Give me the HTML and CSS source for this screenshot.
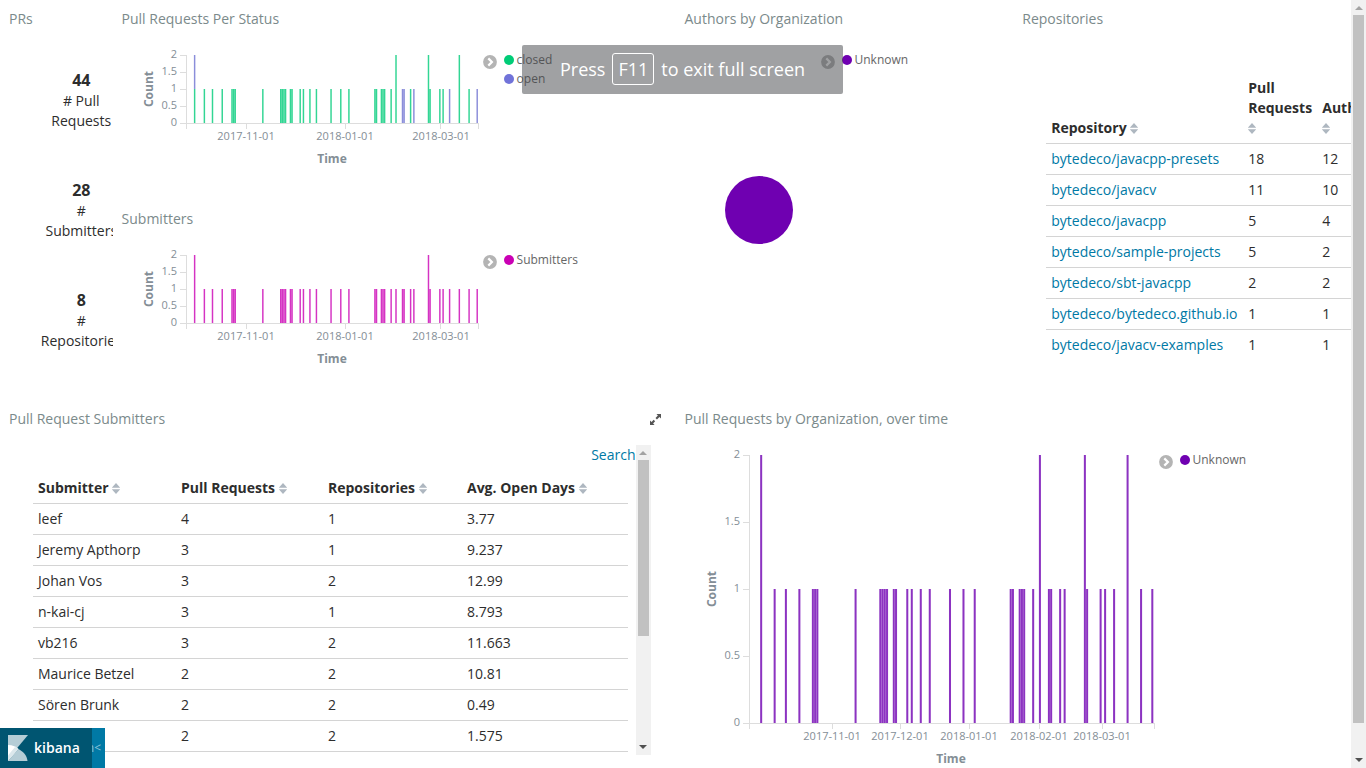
FILE: index.html
```html
<!DOCTYPE html>
<html lang="en">
<head>
<meta charset="utf-8">
<title>Pull Requests - Kibana</title>
<meta name="viewport" content="width=device-width, initial-scale=1">
<link rel="stylesheet" href="styles.css">
</head>
<body>
<svg class="defs" aria-hidden="true">
  <symbol id="sort" viewBox="0 0 8 11"><path d="M4 0L8.200 4.700H-.2zM4 11L8.200 6.300H-.2z" fill="currentColor"/></symbol>
  <symbol id="chevron" viewBox="0 0 14 14"><circle cx="7" cy="7" r="6.9" fill="currentColor"/><path d="M5.3 3.4L8.9 7l-3.6 3.6" fill="none" stroke="#fff" stroke-width="2.2"/></symbol>
  <symbol id="up" viewBox="0 0 8 4"><path d="M4 0L8 4H0z" fill="#a3a3a3"/></symbol>
  <symbol id="down" viewBox="0 0 8 4"><path d="M0 0H8L4 4z" fill="#505050"/></symbol>
</svg>
<div class="app">
  <main class="dashboard">
    <section class="panel panel-metrics">
      <h2>PRs</h2>
      <div class="metrics">
        <div class="metric"><strong>44</strong><span># Pull Requests</span></div>
        <div class="metric"><strong>28</strong><span># Submitters</span></div>
        <div class="metric"><strong>8</strong><span># Repositories</span></div>
      </div>
    </section>

    <section class="panel panel-status">
      <h2>Pull Requests Per Status</h2>
      <div class="chart">
        <svg class="plot" width="360" height="130" viewBox="122 40 360 130" role="img" aria-label="Pull requests per status over time">
          <path class="axis" d="M180 55.5h6.5M180 72.5h6.5M180 89.5h6.5M180 106.5h6.5M180 123.5h298.500M186.500 55v74M246.500 123v6M345.500 123v6M440.500 123v6M478.500 123v6"/>
          <g class="bars" transform="translate(246.600 123) scale(1.624 -34)">
            <path class="closed" d="M-32 0V1M-26 0V1M-21 0V1M-15 0V1M-9 0V1M-8 0V1M-7 0V1M10 0V1M21 0V1M22 0V1M23 0V1M24 0V1M27 0V1M28 0V1M33 0V1M35 0V1M39 0V1M43 0V1M52 0V1M58 0V1M63 0V1M79 0V1M80 0V1M83 0V1M84 0V1M85 0V1M89 0V1M92 0V2M101 0V1M112 0V2M113 0V1M119 0V1M121 0V1M131 0V2M137 0V1"/>
            <path class="open" d="M-32 1V2M96 0V1M97 0V1M103 0V1M125 0V1M142 0V1"/>
          </g>
          <g class="ylabels"><text x="177" y="58">2</text><text x="177" y="75">1.5</text><text x="177" y="92">1</text><text x="177" y="109">0.5</text><text x="177" y="126">0</text></g>
          <g class="xlabels"><text x="246" y="140">2017-11-01</text><text x="345" y="140">2018-01-01</text><text x="441" y="140">2018-03-01</text></g>
          <text class="axis-title" x="332" y="163">Time</text>
          <text class="axis-title" transform="translate(153 89) rotate(-90)">Count</text>
        </svg>
        <button class="toggle" aria-label="Toggle legend"><svg><use href="#chevron"/></svg></button>
        <ul class="legend"><li class="key-closed">closed</li><li class="key-open">open</li></ul>
      </div>
    </section>

    <section class="panel panel-authors">
      <h2>Authors by Organization</h2>
      <div class="chart">
        <svg class="plot" width="135" height="300" viewBox="685 40 135 300" role="img" aria-label="Unknown, all authors"><circle cx="759" cy="210" r="34" fill="#6f00b1"/></svg>
        <button class="toggle" aria-label="Toggle legend"><svg><use href="#chevron"/></svg></button>
        <ul class="legend"><li class="key-unknown">Unknown</li></ul>
      </div>
    </section>

    <section class="panel panel-repos">
      <h2>Repositories</h2>
      <table class="repos">
        <thead><tr>
          <th scope="col">Repository <button aria-label="Sort by repository"><svg><use href="#sort"/></svg></button></th>
          <th scope="col">Pull<br>Requests<br><button aria-label="Sort by pull requests"><svg><use href="#sort"/></svg></button></th>
          <th scope="col">Authors<br><button aria-label="Sort by authors"><svg><use href="#sort"/></svg></button></th>
        </tr></thead>
        <tbody>
          <tr><td><a href="#">bytedeco/javacpp-presets</a></td><td>18</td><td>12</td></tr>
          <tr><td><a href="#">bytedeco/javacv</a></td><td>11</td><td>10</td></tr>
          <tr><td><a href="#">bytedeco/javacpp</a></td><td>5</td><td>4</td></tr>
          <tr><td><a href="#">bytedeco/sample-projects</a></td><td>5</td><td>2</td></tr>
          <tr><td><a href="#">bytedeco/sbt-javacpp</a></td><td>2</td><td>2</td></tr>
          <tr><td><a href="#">bytedeco/bytedeco.github.io</a></td><td>1</td><td>1</td></tr>
          <tr><td><a href="#">bytedeco/javacv-examples</a></td><td>1</td><td>1</td></tr>
        </tbody>
      </table>
    </section>

    <section class="panel panel-submitters">
      <h2>Submitters</h2>
      <div class="chart">
        <svg class="plot" width="360" height="130" viewBox="122 40 360 130" role="img" aria-label="Submitters over time">
          <path class="axis" d="M180 55.5h6.5M180 72.5h6.5M180 89.5h6.5M180 106.5h6.5M180 123.5h298.500M186.500 55v74M246.500 123v6M345.500 123v6M440.500 123v6M478.500 123v6"/>
          <g class="bars" transform="translate(246.600 123) scale(1.624 -34)">
            <path class="submitters" d="M-32 0V2M-26 0V1M-21 0V1M-15 0V1M-9 0V1M-8 0V1M-7 0V1M10 0V1M21 0V1M22 0V1M23 0V1M24 0V1M27 0V1M28 0V1M33 0V1M35 0V1M39 0V1M43 0V1M52 0V1M58 0V1M63 0V1M79 0V1M80 0V1M83 0V1M84 0V1M85 0V1M89 0V1M92 0V1M96 0V1M97 0V1M101 0V1M103 0V1M112 0V2M113 0V1M119 0V1M121 0V1M125 0V1M131 0V1M137 0V1M142 0V1"/>
          </g>
          <g class="ylabels"><text x="177" y="58">2</text><text x="177" y="75">1.5</text><text x="177" y="92">1</text><text x="177" y="109">0.5</text><text x="177" y="126">0</text></g>
          <g class="xlabels"><text x="246" y="140">2017-11-01</text><text x="345" y="140">2018-01-01</text><text x="441" y="140">2018-03-01</text></g>
          <text class="axis-title" x="332" y="163">Time</text>
          <text class="axis-title" transform="translate(153 89) rotate(-90)">Count</text>
        </svg>
        <button class="toggle" aria-label="Toggle legend"><svg><use href="#chevron"/></svg></button>
        <ul class="legend"><li class="key-submitters">Submitters</li></ul>
      </div>
    </section>

    <section class="panel panel-people">
      <header>
        <h2>Pull Request Submitters</h2>
        <button class="expand" aria-label="Expand panel"><svg viewBox="0 0 12 12"><path d="M7 0H12v5L10.300 3.400 7.600 6 6 4.400 8.600 1.700zM5 12H0V7L1.700 8.600 4 6.400 5.600 8 3.400 10.300z" fill="#555"/></svg></button>
      </header>
      <div class="scroller">
        <div class="scroll-content">
          <a class="search" href="#">Search</a>
          <table class="people">
            <thead><tr>
              <th scope="col">Submitter <button aria-label="Sort by submitter"><svg><use href="#sort"/></svg></button></th>
              <th scope="col">Pull Requests <button aria-label="Sort by pull requests"><svg><use href="#sort"/></svg></button></th>
              <th scope="col">Repositories <button aria-label="Sort by repositories"><svg><use href="#sort"/></svg></button></th>
              <th scope="col">Avg. Open Days <button aria-label="Sort by average open days"><svg><use href="#sort"/></svg></button></th>
            </tr></thead>
            <tbody>
              <tr><td>leef</td><td>4</td><td>1</td><td>3.77</td></tr>
              <tr><td>Jeremy Apthorp</td><td>3</td><td>1</td><td>9.237</td></tr>
              <tr><td>Johan Vos</td><td>3</td><td>2</td><td>12.99</td></tr>
              <tr><td>n-kai-cj</td><td>3</td><td>1</td><td>8.793</td></tr>
              <tr><td>vb216</td><td>3</td><td>2</td><td>11.663</td></tr>
              <tr><td>Maurice Betzel</td><td>2</td><td>2</td><td>10.81</td></tr>
              <tr><td>Sören Brunk</td><td>2</td><td>2</td><td>0.49</td></tr>
              <tr><td></td><td>2</td><td>2</td><td>1.575</td></tr>
            </tbody>
          </table>
        </div>
        <div class="scrollbar" aria-hidden="true"><svg><use href="#up"/></svg><div class="track"><div class="thumb thumb-people"></div></div><svg><use href="#down"/></svg></div>
      </div>
    </section>

    <section class="panel panel-orgs">
      <h2>Pull Requests by Organization, over time</h2>
      <div class="chart">
        <svg class="plot" width="473" height="328" viewBox="685 440 473 328" role="img" aria-label="Pull requests by organization over time">
          <path class="axis" d="M743 455.5h6.5M743 522.5h6.5M743 589.5h6.5M743 656.5h6.5M743 723.5h411.500M749.500 455v274M832.500 723v6M900.500 723v6M969.500 723v6M1039.500 723v6M1102.500 723v6M1154.500 723v6"/>
          <g class="bars" transform="translate(833.100 723) scale(2.248 -134)">
            <path class="unknown" d="M-32 0V2M-26 0V1M-21 0V1M-15 0V1M-9 0V1M-8 0V1M-7 0V1M10 0V1M21 0V1M22 0V1M23 0V1M24 0V1M27 0V1M28 0V1M33 0V1M35 0V1M39 0V1M43 0V1M52 0V1M58 0V1M63 0V1M79 0V1M80 0V1M83 0V1M84 0V1M85 0V1M89 0V1M92 0V2M96 0V1M97 0V1M101 0V1M103 0V1M112 0V2M113 0V1M119 0V1M121 0V1M125 0V1M131 0V2M137 0V1M142 0V1"/>
          </g>
          <g class="ylabels"><text x="740" y="458">2</text><text x="740" y="525">1.5</text><text x="740" y="592">1</text><text x="740" y="659">0.5</text><text x="740" y="726">0</text></g>
          <g class="xlabels"><text x="832" y="740">2017-11-01</text><text x="900" y="740">2017-12-01</text><text x="969" y="740">2018-01-01</text><text x="1039" y="740">2018-02-01</text><text x="1102" y="740">2018-03-01</text></g>
          <text class="axis-title" x="951" y="763">Time</text>
          <text class="axis-title" transform="translate(716 589) rotate(-90)">Count</text>
        </svg>
        <button class="toggle" aria-label="Toggle legend"><svg><use href="#chevron"/></svg></button>
        <ul class="legend"><li class="key-unknown">Unknown</li></ul>
      </div>
    </section>
  </main>
  <div class="scrollbar page-scrollbar" aria-hidden="true"><svg><use href="#up"/></svg><div class="track"><div class="thumb thumb-page"></div></div><svg><use href="#down"/></svg></div>
</div>

<div class="notice" role="status">Press <kbd>F11</kbd> to exit full screen</div>

<button class="kibana" aria-label="Exit full screen">
  <span class="brand">
    <svg viewBox="0 0 20 26"><path d="M0 0H20L0 24z" fill="#b5cdd6"/><path d="M0 10c5 0 8 2 10.500 4L0 26z" fill="#fff"/><path d="M10.500 14C16 17 19 21 19.500 26H0z" fill="#b5cdd6"/><path d="M7 12l3.500 2L0 26v-5.500z" fill="#dce8ec"/></svg>
    <span>kibana</span>
  </span>
  <span class="exit">n&lt;</span>
</button>
</body>
</html>
```

FILE: styles.css
```css
* { box-sizing: border-box; }

body {
  margin: 0;
  background: #fff;
  color: #2d2d2d;
  font: 14px/20px "Open Sans", "Noto Sans", sans-serif;
  overflow: hidden;
}

button {
  padding: 0;
  border: 0;
  background: none;
  font: inherit;
  cursor: pointer;
}

a { color: #0079a5; text-decoration: none; }

.defs { display: none; }

.app { display: flex; height: 100vh; }

.dashboard {
  flex: 1;
  min-width: 0;
  display: grid;
  grid-template-columns: repeat(12, minmax(0, 1fr));
  grid-template-rows: 200px 200px minmax(0, 1fr);
}

.panel { overflow: hidden; padding: 9px 0 0 9px; }
.panel h2 { margin: 0; color: #7b8a8b; font-size: 14px; font-weight: 400; }

.panel-metrics { grid-area: 1 / 1 / 3 / 2; }
.panel-status { grid-area: 1 / 2 / 2 / 7; }
.panel-submitters { grid-area: 2 / 2 / 3 / 7; }
.panel-authors { grid-area: 1 / 7 / 3 / 10; }
.panel-repos { grid-area: 1 / 10 / 3 / 13; }
.panel-people { grid-area: 3 / 1 / 4 / 7; }
.panel-orgs { grid-area: 3 / 7 / 4 / 13; }

.metrics {
  display: flex;
  flex-direction: column;
  gap: 49px;
  padding: 41px 0 0 41px;
}
.metric { display: flex; flex-direction: column; align-items: center; }
.metric strong { margin-bottom: 1px; font-size: 16px; }
.metric span { width: min-content; text-align: center; }

.chart { display: flex; align-items: flex-start; padding-top: 11px; }
.plot { flex: none; }
.toggle { margin: 15px 7px 0 1px; color: #b4b4b4; }
.toggle svg { display: block; width: 14px; height: 14px; }

.axis { fill: none; stroke: #ddd; }
.bars { fill: none; stroke-width: .9; opacity: .8; }
.closed { stroke: #00cc7a; }
.open { stroke: #6f72d2; }
.submitters { stroke: #ca00b4; }
.unknown { stroke: #6f00b1; }
.ylabels, .xlabels { fill: #848e96; font-size: 11px; }
.ylabels { text-anchor: end; }
.xlabels, .axis-title { text-anchor: middle; }
.axis-title { fill: #848e96; font-size: 12px; font-weight: 700; }

.legend { margin: 0; padding: 10px 0 0; list-style: none; color: #666; font-size: 12px; line-height: 19px; }
.legend li { display: flex; align-items: center; gap: 3px; }
.legend li::before { content: ""; width: 10px; height: 10px; border-radius: 50%; }
.legend .key-closed::before { background: #0c7; }
.legend .key-open::before { background: #7173d9; }
.legend .key-submitters::before { background: #ca00b4; }
.legend .key-unknown::before { background: #6f00b1; }

table { border-collapse: collapse; table-layout: fixed; }
th, td { padding: 5px; text-align: left; vertical-align: bottom; white-space: nowrap; }
th { font-weight: 700; }
td { border-top: 1px solid #d4d4d4; }
th button { height: 20px; vertical-align: top; color: #aeb7c0; }
th svg { display: block; width: 8px; height: 11px; overflow: visible; }

.repos { width: 360px; margin: 44px 0 0 24px; }
.repos th:nth-child(1) { width: 197px; }
.repos th:nth-child(2) { width: 74px; }

.panel-people header { display: flex; justify-content: space-between; padding-right: 15px; }
.expand svg { display: block; width: 11px; height: 11px; }
.scroller { display: flex; height: 310px; margin: 16px 25px 0 0; }
.scroll-content { flex: 1; min-width: 0; overflow: hidden; }
.search { display: block; text-align: right; }
.people { width: calc(100% - 32px); margin: 8px 8px 0 24px; }
.people th:nth-child(1) { width: 143px; }
.people th:nth-child(2) { width: 147px; }
.people th:nth-child(3) { width: 139px; }
.people tbody tr:last-child td { border-bottom: 1px solid #d4d4d4; }

.scrollbar {
  flex: none;
  display: flex;
  flex-direction: column;
  align-items: center;
  justify-content: space-between;
  width: 15px;
  padding: 6px 0;
  background: #f1f1f1;
}
.scrollbar svg { flex: none; width: 8px; height: 4px; }
.track { flex: 1; width: 11px; margin: 5px 0; }
.thumb { background: #c1c1c1; }
.thumb-people { height: 63%; }
.thumb-page { height: 96%; }

.notice {
  position: absolute;
  top: 45px;
  left: 50%;
  display: flex;
  align-items: center;
  justify-content: center;
  gap: 7px;
  width: 321px;
  height: 49px;
  margin-left: -161px;
  padding-bottom: 1px;
  border-radius: 2px;
  background: rgba(66, 68, 72, .5);
  color: #fff;
  font-size: 18px;
}
.notice kbd {
  padding: 5px;
  border: 1px solid #fff;
  border-radius: 3px;
  font: inherit;
}

.kibana { position: absolute; bottom: 0; left: 0; display: flex; height: 40px; color: #fff; }
.brand {
  display: flex;
  align-items: center;
  gap: 6px;
  width: 92px;
  height: 100%;
  padding-left: 8px;
  background: #005571;
  font-size: 14px;
  font-weight: 600;
}
.brand svg { width: 20px; height: 26px; }
.exit {
  display: flex;
  align-items: center;
  justify-content: flex-end;
  width: 13px;
  height: 100%;
  padding-right: 4px;
  overflow: hidden;
  background: #0079a5;
  color: #8cc4da;
  font-size: 12px;
}
```
